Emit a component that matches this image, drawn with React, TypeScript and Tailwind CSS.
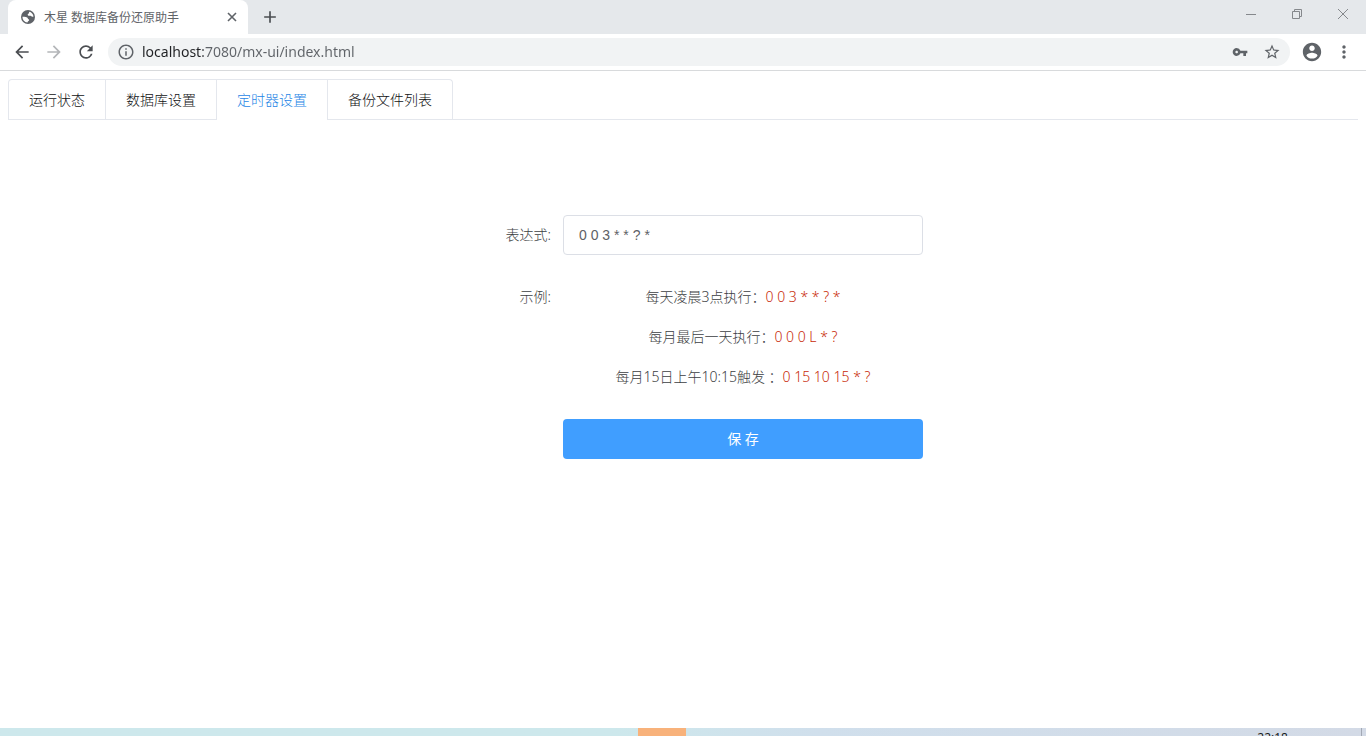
import { useState } from "react";
import clsx from "clsx";
import {
  MdAdd,
  MdArrowBack,
  MdArrowForward,
  MdInfoOutline,
  MdMoreVert,
  MdRefresh,
  MdStarBorder,
  MdVpnKey,
} from "react-icons/md";

const tabs = ["运行状态", "数据库设置", "定时器设置", "备份文件列表"];

const examples = [
  { label: "每天凌晨3点执行：", cron: "0 0 3 * * ? *" },
  { label: "每月最后一天执行：", cron: "0 0 0 L * ?" },
  { label: "每月15日上午10:15触发 ：", cron: "0 15 10 15 * ?" },
];

function GlobeIcon() {
  return (
    <svg width="16" height="16" viewBox="0 0 16 16" className="shrink-0">
      <circle cx="8" cy="8" r="7" fill="currentColor" />
      <path
        d="M2.500 7.800c1.500-.3 3.600-.2 4.700.6.8.6.5 1.500 1.400 1.900.9.4.6 1.400-.2 1.800-.8.5-.6 1.200-1 1.500C4.500 13.300 2.400 10.800 2.500 7.800z"
        fill="white"
      />
      <path
        d="M9.300 2.700c2.200.5 3.900 2.300 4.200 4.700-.9.700-1.900.2-2.500-.3-.9-.6-2.100.1-2.900-.5-.9-.8-.1-1.700.6-2 .7-.4 0-1.300.6-1.900z"
        fill="white"
      />
    </svg>
  );
}

function AccountIcon() {
  return (
    <svg width="22" height="22" viewBox="0 0 24 24" fill="currentColor">
      <path d="M12 2C6.480 2 2 6.480 2 12s4.480 10 10 10 10-4.480 10-10S17.520 2 12 2zm0 3c1.660 0 3 1.340 3 3s-1.340 3-3 3-3-1.340-3-3 1.340-3 3-3zm0 14.200c-2.500 0-4.710-1.280-6-3.220.03-1.990 4-3.080 6-3.080 1.990 0 5.970 1.090 6 3.080-1.290 1.940-3.500 3.220-6 3.220z" />
    </svg>
  );
}

function TitleBar() {
  return (
    <div className="flex h-[34px] items-stretch bg-[#e5e8eb] pl-2">
      <div className="flex w-60 items-center rounded-t-lg bg-white pr-2 pl-3 text-[#5f6368]">
        <GlobeIcon />
        <span className="ml-2 flex-1 pt-px text-xs whitespace-nowrap">
          木星 数据库备份还原助手
        </span>
        <button type="button" aria-label="关闭标签页">
          <svg width="16" height="16" viewBox="0 0 16 16" stroke="currentColor" strokeWidth="1.6">
            <path d="M4 4l8 8M12 4l-8 8" />
          </svg>
        </button>
      </div>
      <button type="button" aria-label="新标签页" className="ml-3 text-[#4b4e52]">
        <MdAdd className="size-5" />
      </button>
      <div className="ml-auto flex items-center pb-1.5 text-[#85888c]">
        <button type="button" aria-label="最小化" className="flex w-[46px] justify-center">
          <svg width="12" height="12" viewBox="0 0 12 12" stroke="currentColor" fill="none">
            <path d="M1 6.5h10" />
          </svg>
        </button>
        <button type="button" aria-label="还原" className="flex w-[46px] justify-center">
          <svg width="12" height="12" viewBox="0 0 12 12" stroke="currentColor" fill="none">
            <path d="M1.500 3.500h7v7h-7zM3.500 3.500v-2h7v7h-2" />
          </svg>
        </button>
        <button type="button" aria-label="关闭" className="flex w-[46px] justify-center">
          <svg width="12" height="12" viewBox="0 0 12 12" stroke="currentColor" fill="none">
            <path d="M1 1l10 10M11 1L1 11" />
          </svg>
        </button>
      </div>
    </div>
  );
}

function Toolbar() {
  return (
    <div className="flex h-[37px] items-center border-b border-[#d8dadc] bg-white px-3 text-[#5f6368]">
      <div className="flex gap-3">
        <button type="button" aria-label="后退">
          <MdArrowBack className="size-5 text-[#4b4e52]" />
        </button>
        <button type="button" aria-label="前进">
          <MdArrowForward className="size-5 text-[#b4b6b9]" />
        </button>
        <button type="button" aria-label="重新加载">
          <MdRefresh className="size-5 text-[#4b4e52]" />
        </button>
      </div>
      <div className="ml-3 flex h-7 flex-1 items-center rounded-full bg-[#f1f3f4] px-[9px]">
        <MdInfoOutline className="size-[18px]" />
        <input
          aria-label="地址"
          defaultValue="localhost:7080/mx-ui/index.html"
          className="ml-[7px] flex-1 bg-linear-to-r from-[#202124] from-[61px] to-[#5f6368] to-[61px] bg-clip-text text-sm text-transparent outline-none"
        />
        <button type="button" aria-label="密码">
          <MdVpnKey className="size-4" />
        </button>
        <button type="button" aria-label="收藏" className="ml-[15px]">
          <MdStarBorder className="size-[18px]" />
        </button>
      </div>
      <button type="button" aria-label="用户" className="ml-[11px]">
        <AccountIcon />
      </button>
      <button type="button" aria-label="更多" className="ml-[11px]">
        <MdMoreVert className="size-5" />
      </button>
    </div>
  );
}

export default function App() {
  const [active, setActive] = useState(2);
  const [cron, setCron] = useState("0 0 3 * * ? *");

  return (
    <div className="flex min-h-screen flex-col bg-white font-['Noto_Sans','Noto_Sans_CJK_SC',sans-serif]">
      <TitleBar />
      <Toolbar />

      <main className="flex-1 p-2 text-sm font-light text-[#3c3e42]">
        <div className="flex border-b border-[#e4e7ed]">
          <div role="tablist" className="flex rounded-t border border-b-0 border-[#e4e7ed]">
            {tabs.map((tab, i) => (
              <button
                key={tab}
                type="button"
                role="tab"
                aria-selected={i === active}
                onClick={() => setActive(i)}
                className={clsx(
                  "px-5",
                  i > 0 && "border-l border-[#e4e7ed]",
                  i === active ? "-mb-px h-10 bg-white text-[#1f86e6]" : "h-[39px] text-[#101113]",
                )}
              >
                {tab}
              </button>
            ))}
          </div>
        </div>

        <form
          className="mx-auto mt-[95px] grid max-w-[480px] grid-cols-[120px_1fr] leading-10"
          onSubmit={(e) => e.preventDefault()}
        >
          <label htmlFor="cron" className="pr-3 text-right">
            表达式:
          </label>
          <input
            id="cron"
            value={cron}
            onChange={(e) => setCron(e.target.value)}
            className="h-10 rounded border border-[#dcdfe6] px-[15px] font-['Liberation_Sans',sans-serif] text-[#606266] outline-none"
          />

          <div className="mt-[22px] pr-3 text-right">示例:</div>
          <div className="mt-[22px] text-center">
            {examples.map((item) => (
              <p key={item.cron}>
                {item.label}
                <span className="text-[#c82a08]">{item.cron}</span>
              </p>
            ))}
          </div>

          <button
            type="submit"
            className="col-start-2 mt-[22px] h-10 rounded bg-[#409eff] font-normal text-white"
          >
            保 存
          </button>
        </form>
      </main>

      <footer className="flex h-2 overflow-hidden bg-linear-to-r from-[#cde8ec] from-45% via-[#d0dfec] via-60% to-[#d3dae6]">
        <div className="w-[638px] shrink" />
        <div className="w-12 shrink-0 bg-[#f8b27b]" />
        <time className="mt-1 mr-[73px] ml-auto text-xs leading-3 text-[#1b1d22]">22:18</time>
        <div className="mr-1 w-px bg-[#a3a9b5]" />
      </footer>
    </div>
  );
}
